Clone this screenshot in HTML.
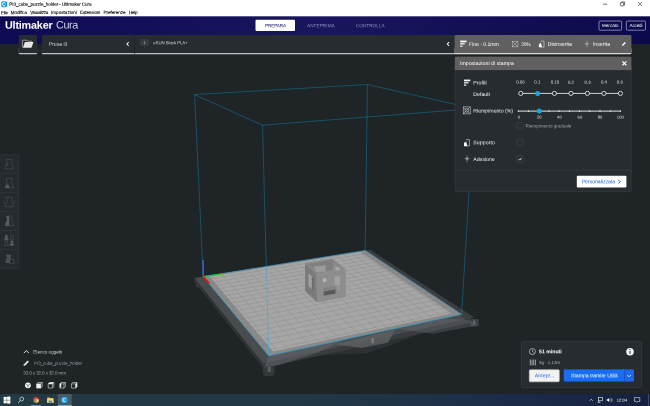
<!DOCTYPE html>
<html lang="it"><head><meta charset="utf-8"><title>PI3_cube_puzzle_holder - Ultimaker Cura</title>
<style>*{box-sizing:border-box;margin:0;padding:0}
html,body{width:650px;height:406px;overflow:hidden;background:#1f2427}
body{position:relative;font-family:"Liberation Sans",sans-serif}
.scene{position:absolute;left:0;top:0}
svg{display:block}
.t{position:absolute;left:0;top:0;transform-origin:0 0;white-space:nowrap;line-height:10px;font-family:"Liberation Sans",sans-serif}
.t u{text-decoration-thickness:0.3px;text-underline-offset:0.5px;text-decoration-color:rgba(0,0,0,0.55)}
.tl{position:absolute;left:0;top:0;width:650px;height:406px;will-change:transform}
</style></head>
<body>
<svg class="scene" width="650" height="406" viewBox="0 0 650 406">
<line x1="194.60" y1="94.60" x2="367.40" y2="84.50" stroke="#0ca9e3" stroke-width="0.8" stroke-opacity="0.42"/>
<line x1="367.40" y1="84.50" x2="474.00" y2="108.60" stroke="#0ca9e3" stroke-width="0.8" stroke-opacity="0.42"/>
<line x1="194.60" y1="94.60" x2="203.20" y2="276.60" stroke="#0ca9e3" stroke-width="0.8" stroke-opacity="0.42"/>
<line x1="367.40" y1="84.50" x2="365.20" y2="250.40" stroke="#0ca9e3" stroke-width="0.8" stroke-opacity="0.42"/>
<polygon points="300,356 366,353.2 388,346 424,332 424,326 300,350" fill="#2d3134"/>
<rect x="196.2" y="279.0" width="8" height="8.4" rx="1.8" fill="#44484b"/>
<rect x="198.0" y="280.4" width="2.2" height="4.8" fill="#585b5e"/>
<path d="M263 368.5a3 3 0 0 1 3-3h8.6v7.5a3 3 0 0 1-3 3h-5.6a3 3 0 0 1-3-3z" fill="#34383b"/>
<rect x="267.6" y="366.6" width="3.2" height="5.2" fill="#5c5f62"/>
<rect x="470.2" y="319.0" width="8.6" height="7.4" rx="1.4" fill="#3c4043"/>
<rect x="473.2" y="320.6" width="2.2" height="3.8" fill="#666a6d"/>
<polygon points="263.05,363.58 471.31,318.21 471.31,322.61 263.05,367.98" fill="#383c3f"/>
<polygon points="194.53,277.88 263.05,363.58 263.05,367.98 194.53,282.28" fill="#2f3336"/>
<polygon points="194.53,277.88 367.25,250.16 471.31,318.21 263.05,363.58" fill="#494c4f"/>
<polygon points="362.88,250.86 369.87,249.74 474.37,317.54 466.17,319.33" fill="#3c3f42"/>
<polygon points="269,356 345,339.8 318,352.5 277.5,365.5 264.5,367" fill="#6a6d70" fill-opacity="0.45"/>
<polygon points="398,328.8 446,318.2 470.5,320.2 477,325.4 432,333.8" fill="#6a6d70" fill-opacity="0.38"/>
<polygon points="334.6,344.2 395.4,329.6 387.7,342.7 361.5,348.1" fill="#5e6164" fill-opacity="0.8"/>
<rect x="371.5" y="338.2" width="2.2" height="5.0" fill="#7c7f82"/>
<polygon points="203.20,276.60 365.20,250.40 461.60,314.30 268.70,355.80" fill="#8a8a8a"/>
<polygon points="209.67,276.47 360.45,252.01 451.55,313.47 273.35,351.46" fill="#a6a6a6"/>
<path d="M212.08 275.16L279.52 353.47M205.81 279.76L369.13 253.01M220.88 273.74L290.21 351.17M208.48 282.98L373.14 255.67M229.58 272.33L300.76 348.90M211.20 286.28L377.23 258.38M238.20 270.94L311.18 346.66M213.99 289.64L381.41 261.14M246.73 269.56L321.47 344.45M216.84 293.09L385.66 263.96M255.17 268.19L331.62 342.26M219.75 296.61L390.00 266.84M263.54 266.84L341.66 340.10M222.73 300.21L394.43 269.78M271.82 265.50L351.56 337.97M225.77 303.89L398.96 272.78M280.02 264.18L361.35 335.87M228.89 307.66L403.58 275.84M288.14 262.86L371.02 333.79M232.08 311.52L408.29 278.96M296.18 261.56L380.57 331.73M235.35 315.47L413.11 282.16M304.14 260.27L390.01 329.70M238.70 319.52L418.03 285.42M312.03 259.00L399.33 327.70M242.13 323.67L423.06 288.75M319.85 257.74L408.54 325.71M245.64 327.92L428.20 292.16M327.58 256.48L417.65 323.76M249.24 332.27L433.45 295.64M335.25 255.24L426.64 321.82M252.94 336.74L438.83 299.21M342.84 254.02L435.54 319.91M256.72 341.32L444.33 302.85M350.36 252.80L444.33 318.02M260.61 346.02L449.95 306.58M357.82 251.59L453.01 316.15M264.60 350.85L455.71 310.39" stroke="#787878" stroke-width="0.4" fill="none" stroke-opacity="0.6"/>
<line x1="203.20" y1="276.60" x2="365.20" y2="250.40" stroke="#2aa5d8" stroke-width="0.85" stroke-opacity="0.6"/>
<line x1="365.20" y1="250.40" x2="461.60" y2="314.30" stroke="#2aa5d8" stroke-width="0.85" stroke-opacity="0.5"/>
<line x1="461.60" y1="314.30" x2="268.70" y2="355.80" stroke="#2aa5d8" stroke-width="0.85" stroke-opacity="0.8"/>
<line x1="268.70" y1="355.80" x2="203.20" y2="276.60" stroke="#2aa5d8" stroke-width="0.85" stroke-opacity="0.7"/>
<polygon points="305.00,263.00 332.40,258.60 345.80,269.30 316.50,273.90" fill="#8a8a8a"/>
<polygon points="308.43,264.11 332.21,260.30 342.02,268.23 317.04,272.16" fill="#7f7f7f"/>
<polygon points="313.4,266.2 325.6,265.6 325.6,271.6 316.0,272.0" fill="#9c9c9c"/>
<polygon points="333.0,262.0 343.5,269.0 343.5,271.5 333.0,270.6" fill="#8d8d8d"/>
<polygon points="335.4,266.6 339.8,267.8 340.2,271.0 335.4,270.4" fill="#a6a6a6"/>
<polygon points="305.00,263.00 316.50,273.90 317.10,302.50 305.00,291.00" fill="#7b7b7b"/>
<polygon points="308.50,273.31 314.32,278.84 314.54,291.66 308.58,286.00" fill="#a0a0a0"/>
<polygon points="311.76,276.41 314.32,278.84 314.54,291.66 311.91,289.17" fill="#6c6c6c"/>
<polygon points="316.50,273.90 345.80,269.30 345.80,297.00 317.10,302.50" fill="#8d8d8d"/>
<polygon points="323.04,278.57 326.25,278.04 326.30,281.86 323.10,282.40" fill="#b6b6b6"/>
<polygon points="334.63,276.81 339.96,275.94 340.02,289.46 334.74,290.41" fill="#a2a2a2"/>
<polygon points="334.70,285.65 340.00,284.72 340.02,289.46 334.74,290.41" fill="#949494"/>
<polygon points="323.19,287.94 336.53,285.61 336.58,293.72 323.33,296.18" fill="#838383"/>
<polygon points="323.83,291.53 335.39,289.45 335.42,293.38 323.90,295.50" fill="#5a5a5a"/>
<line x1="474.00" y1="108.60" x2="262.50" y2="125.20" stroke="#0ca9e3" stroke-width="0.8" stroke-opacity="0.42"/>
<line x1="262.50" y1="125.20" x2="194.60" y2="94.60" stroke="#0ca9e3" stroke-width="0.8" stroke-opacity="0.42"/>
<line x1="262.50" y1="125.20" x2="268.70" y2="355.80" stroke="#0ca9e3" stroke-width="0.8" stroke-opacity="0.42"/>
<line x1="474.00" y1="108.60" x2="461.60" y2="314.30" stroke="#0ca9e3" stroke-width="0.8" stroke-opacity="0.42"/>
<line x1="267.12" y1="297.00" x2="268.70" y2="355.80" stroke="#35b8ee" stroke-width="0.8" stroke-opacity="0.35"/>
<line x1="203.20" y1="276.60" x2="203.10" y2="260.00" stroke="#5a5aeb" stroke-width="1.3" stroke-opacity="1"/>
<line x1="203.20" y1="276.60" x2="221.80" y2="274.20" stroke="#22cc22" stroke-width="1.3" stroke-opacity="1"/>
<line x1="203.20" y1="276.60" x2="209.40" y2="283.20" stroke="#ee1111" stroke-width="1.6" stroke-opacity="1"/>
</svg>
<svg class="scene" width="650" height="406" viewBox="0 0 650 406">
<defs><linearGradient id="hg" x1="0" y1="0" x2="1" y2="0"><stop offset="0" stop-color="#0d0b54"/><stop offset="0.5" stop-color="#18165d"/><stop offset="1" stop-color="#0c0a4c"/></linearGradient><linearGradient id="tg" x1="0" y1="0" x2="1" y2="0"><stop offset="0" stop-color="#233a43"/><stop offset="0.4" stop-color="#223945"/><stop offset="0.6" stop-color="#203447"/><stop offset="0.78" stop-color="#1c2c48"/><stop offset="1" stop-color="#161f40"/></linearGradient></defs>
<rect x="0.00" y="16.00" width="650.00" height="28.00" fill="url(#hg)"/>
<rect x="0.00" y="0.00" width="650.00" height="16.30" fill="#ffffff"/>
<rect x="1.20" y="1.20" width="6.00" height="6.00" fill="#1ca0e4" rx="1.5"/>
<g stroke="#1a1a1a" stroke-width="0.6" fill="none"><path d="M603 4.2h4.2"/><rect x="620.4" y="2.7" width="3.2" height="3.2" rx="0.4"/><path d="M621.4 2.7v-0.8h3.2v3.2h-0.9"/><path d="M638 2.1l4 4M642 2.1l-4 4"/></g>
<rect x="255.50" y="19.80" width="39.50" height="11.20" fill="#ffffff" rx="1"/>
<rect x="599.00" y="21.00" width="22.60" height="9.20" fill="none" rx="1" stroke="#a5a3d2" stroke-width="0.75"/>
<rect x="626.30" y="21.00" width="19.20" height="9.20" fill="none" rx="1" stroke="#a5a3d2" stroke-width="0.75"/>
<rect x="18.70" y="48.00" width="18.40" height="6.30" fill="#bdbebf" rx="1"/>
<rect x="18.70" y="34.90" width="18.40" height="18.00" fill="#272c30" rx="1"/>
<rect x="18.70" y="50.00" width="18.40" height="2.90" fill="#272c30"/>
<rect x="41.90" y="48.00" width="414.00" height="6.30" fill="#bdbebf" rx="1"/>
<rect x="41.90" y="34.90" width="414.00" height="18.00" fill="#272c30" rx="1"/>
<rect x="41.90" y="50.00" width="414.00" height="2.90" fill="#272c30"/>
<rect x="134.30" y="34.80" width="0.60" height="19.50" fill="#1f2427"/>
<rect x="454.60" y="48.00" width="176.80" height="6.30" fill="#d6d6d6" rx="1"/>
<rect x="454.60" y="34.90" width="176.80" height="18.00" fill="#606060" rx="1"/>
<rect x="454.60" y="50.00" width="176.80" height="2.90" fill="#606060"/>
<rect x="455.20" y="57.00" width="176.00" height="134.60" fill="#272c30" rx="1" stroke="#3c4145" stroke-width="0.6"/>
<rect x="454.90" y="56.80" width="176.40" height="13.30" fill="#606060" rx="1"/>
<rect x="454.90" y="66.00" width="176.40" height="4.10" fill="#606060"/>
<rect x="455.50" y="169.80" width="175.40" height="0.60" fill="#3c4145"/>
<rect x="576.80" y="175.80" width="49.60" height="11.80" fill="#ffffff" rx="1"/>
<rect x="-1.00" y="154.80" width="19.80" height="113.50" fill="#252a2e" rx="1" stroke="#353a3e" stroke-width="0.6"/>
<rect x="0.00" y="173.40" width="18.80" height="0.60" fill="#353a3e"/>
<rect x="0.00" y="192.30" width="18.80" height="0.60" fill="#353a3e"/>
<rect x="0.00" y="211.20" width="18.80" height="0.60" fill="#353a3e"/>
<rect x="0.00" y="230.10" width="18.80" height="0.60" fill="#353a3e"/>
<rect x="0.00" y="249.00" width="18.80" height="0.60" fill="#353a3e"/>
<rect x="521.50" y="341.40" width="120.20" height="46.30" fill="#272c30" rx="1.5" stroke="#3c4145" stroke-width="0.6"/>
<rect x="529.30" y="369.80" width="30.00" height="12.00" fill="#f2f2f2" rx="1" stroke="#c9c9c9" stroke-width="0.6"/>
<rect x="563.80" y="369.50" width="60.50" height="12.60" fill="#0f469c" rx="1"/>
<rect x="563.80" y="369.50" width="60.50" height="11.80" fill="#196ef0" rx="1"/>
<rect x="624.30" y="369.50" width="9.60" height="12.60" fill="#4a2fa0" rx="1"/>
<rect x="624.30" y="369.50" width="9.60" height="11.80" fill="#1b69e8" rx="1"/>
<rect x="622.00" y="369.50" width="2.30" height="11.80" fill="#196ef0"/>
<rect x="624.00" y="369.50" width="1.10" height="11.80" fill="#1757c8"/>
<rect x="0.00" y="394.00" width="650.00" height="12.00" fill="url(#tg)"/>
<rect x="57.80" y="394.00" width="13.90" height="12.00" fill="#465c66"/>
<rect x="30.70" y="405.30" width="10.40" height="0.70" fill="#76b9ed"/>
<rect x="57.80" y="405.30" width="13.90" height="0.70" fill="#8ccbf5"/>
<rect x="648.40" y="394.00" width="0.50" height="12.00" fill="#6b7690"/>
</svg>
<svg class="scene" width="650" height="406" viewBox="0 0 650 406">
<path d="M1.2 14.45h2M10.9 14.45h3.2M30.3 14.45h2.6M51.1 14.45h0.9M83.0 14.45h2M106.2 14.45h1.5M128.9 14.45h2.8" stroke="#000" stroke-opacity="0.6" stroke-width="0.35"/>
<path d="M5.3 3.1a1.6 1.6 0 1 0 0 2.2" stroke="#fff" stroke-width="0.9" fill="none"/>
<path d="M22.4 47.5v-7.3h4.6l0.9 1h3.8v1" stroke="#e4e4e4" stroke-width="0.55" fill="none"/><path d="M24.9 42.1h8.6l-2 5.6h-8.6z" fill="#e6e6e6"/>
<path d="M128.7 42.2l-1.8 1.9l1.8 1.9" stroke="#f0f0f0" stroke-width="1.05" fill="none"/>
<path d="M449.1 42.2l-1.8 1.9l1.8 1.9" stroke="#f0f0f0" stroke-width="1.05" fill="none"/>
<path d="M140.1 39.2h8.6v6.6h-3l-1.3 1.9l-1.3-1.9h-3z" fill="#393b3c"/>
<g fill="#ffffff"><rect x="460.2" y="40.6" width="6.30" height="1.70"/><rect x="460.2" y="43.20" width="4.50" height="1.20"/><rect x="460.2" y="45.50" width="2.30" height="1.20"/></g>
<g fill="#ffffff"><rect x="464.0" y="79.6" width="6.30" height="1.70"/><rect x="464.0" y="82.20" width="4.50" height="1.20"/><rect x="464.0" y="84.50" width="2.30" height="1.20"/></g>
<g stroke="#d8d8d8" stroke-width="0.42" fill="none"><rect x="512.3" y="41.3" width="5.6" height="5.6"/><path d="M512.3 41.3l5.6 5.6M517.9 41.3l-5.6 5.6"/></g>
<g stroke="#e0e0e0" stroke-width="0.5" fill="none"><rect x="463.2" y="106.9" width="7.0" height="7.0"/><path d="M463.2 106.9l7.0 7.0M470.2 106.9l-7.0 7.0"/><circle cx="466.7" cy="110.4" r="1.93" fill="none"/></g>
<g transform="translate(538.8 40.9) scale(0.95)"><path d="M2.0 0.3h3.5v6.2h-2.6" fill="none" stroke="#ffffff" stroke-width="0.5"/><path d="M0.1 6.8v-3.2l2.1-1.6l1.2 4.8z" fill="#ffffff"/></g>
<g transform="translate(463.9 139.4) scale(1.0)"><path d="M2.0 0.3h3.5v6.2h-2.6" fill="none" stroke="#ffffff" stroke-width="0.5"/><path d="M0.1 6.8v-3.2l2.1-1.6l1.2 4.8z" fill="#ffffff"/></g>
<g transform="translate(584.2 40.7) scale(0.95)" stroke="#b8b8b8" stroke-width="0.5" fill="none"><path d="M2.9 0v6.8M0.3 3.3h5.2"/><circle cx="2.9" cy="3.3" r="1.1"/></g>
<g transform="translate(464.2 155.4) scale(0.98)" stroke="#c0c4c6" stroke-width="0.5" fill="none"><path d="M2.9 0v6.8M0.3 3.3h5.2"/><circle cx="2.9" cy="3.3" r="1.1"/></g>
<path d="M621.9 45.9l0.4-1.4l2.6-2.6l1 1l-2.6 2.6z" fill="#ffffff"/>
<path d="M622.4 61.3l4 4M626.4 61.3l-4 4" stroke="#fff" stroke-width="1.15"/>
<path d="M520.8 93.4H620.4" stroke="#dcdcdc" stroke-width="0.95"/>
<circle cx="520.8" cy="93.4" r="2.1" fill="#272c30" stroke="#f4f4f4" stroke-width="0.8"/>
<circle cx="537.6" cy="93.4" r="2.5" fill="#0ca9e3"/>
<circle cx="554.4" cy="93.4" r="2.1" fill="#272c30" stroke="#f4f4f4" stroke-width="0.8"/>
<circle cx="571.0" cy="93.4" r="2.1" fill="#272c30" stroke="#f4f4f4" stroke-width="0.8"/>
<circle cx="587.4" cy="93.4" r="2.1" fill="#272c30" stroke="#f4f4f4" stroke-width="0.8"/>
<circle cx="603.9" cy="93.4" r="2.1" fill="#272c30" stroke="#f4f4f4" stroke-width="0.8"/>
<circle cx="620.4" cy="93.4" r="2.1" fill="#272c30" stroke="#f4f4f4" stroke-width="0.8"/>
<path d="M518.2 111.1H620.9" stroke="#bfc1c2" stroke-width="1.2"/>
<rect x="517.85" y="110.3" width="0.8" height="1.6" fill="#f4f4f4"/>
<rect x="528.07" y="110.3" width="0.8" height="1.6" fill="#f4f4f4"/>
<rect x="538.29" y="110.3" width="0.8" height="1.6" fill="#f4f4f4"/>
<rect x="548.51" y="110.3" width="0.8" height="1.6" fill="#f4f4f4"/>
<rect x="558.73" y="110.3" width="0.8" height="1.6" fill="#f4f4f4"/>
<rect x="568.95" y="110.3" width="0.8" height="1.6" fill="#f4f4f4"/>
<rect x="579.17" y="110.3" width="0.8" height="1.6" fill="#f4f4f4"/>
<rect x="589.39" y="110.3" width="0.8" height="1.6" fill="#f4f4f4"/>
<rect x="599.61" y="110.3" width="0.8" height="1.6" fill="#f4f4f4"/>
<rect x="609.83" y="110.3" width="0.8" height="1.6" fill="#f4f4f4"/>
<rect x="620.05" y="110.3" width="0.8" height="1.6" fill="#f4f4f4"/>
<circle cx="539.2" cy="111.1" r="2.5" fill="#0ca9e3"/>
<rect x="516.7" y="122.6" width="6.7" height="6.8" rx="0.8" fill="#292e32" stroke="#3a3f43" stroke-width="0.8"/>
<rect x="516.7" y="139.1" width="6.7" height="6.8" rx="0.8" fill="#292e32" stroke="#3d4246" stroke-width="0.8"/>
<rect x="516.7" y="155.6" width="6.7" height="6.8" rx="0.8" fill="#292e32" stroke="#3d4246" stroke-width="0.8"/>
<path d="M518.8 159.1l1 1l1.6-1.9" stroke="#fff" stroke-width="0.85" fill="none"/>
<path d="M618.4 179.9l1.8 1.8l-1.8 1.8" stroke="#1a60d8" stroke-width="1.0" fill="none"/>
<path d="M6.4 159.4h5.8l-0.7 3.8l2.2 5.8h-8.8l2.2-5.8z" stroke="#565b5f" stroke-width="0.5" fill="none"/>
<path d="M6.4 178.3h5.8l-0.7 3.8l2.2 5.8h-8.8l2.2-5.8z" stroke="#565b5f" stroke-width="0.5" fill="none"/>
<path d="M6.4 197.20000000000002h5.8l-0.7 3.8l2.2 5.8h-8.8l2.2-5.8z" stroke="#565b5f" stroke-width="0.5" fill="none"/>
<path d="M6.4 216.1h5.8l-0.7 3.8l2.2 5.8h-8.8l2.2-5.8z" stroke="#565b5f" stroke-width="0.5" fill="none"/>
<path d="M5.2 164.6h3.2M7.6 163.8l0.9 0.8l-0.9 0.8" stroke="#565b5f" stroke-width="0.5" fill="none"/>
<path d="M5.2 187.9l1.4-3.4h1.8l1.2 3.4z" fill="#565b5f"/>
<path d="M4.6 200.6c-0.8 1 -0.8 2.4 0 3.4M13.8 200.6c0.8 1 0.8 2.4 0 3.4" stroke="#565b5f" stroke-width="0.5" fill="none"/>
<path d="M9.3 216.2h-2.9l0.7 3.8l-2.2 5.8h4.4z" fill="#565b5f"/>
<path d="M5.1000000000000005 235.29999999999998h2.6l-0.3 1.8l1 2.8h-4l1-2.8z" stroke="#565b5f" stroke-width="0.45" fill="#565b5f"/><path d="M10.6 235.29999999999998h2.6l-0.3 1.8l1 2.8h-4l1-2.8z" stroke="#565b5f" stroke-width="0.45" fill="none"/><path d="M5.1000000000000005 240.89999999999998h2.6l-0.3 1.8l1 2.8h-4l1-2.8z" stroke="#565b5f" stroke-width="0.45" fill="none"/><path d="M10.6 240.89999999999998h2.6l-0.3 1.8l1 2.8h-4l1-2.8z" stroke="#565b5f" stroke-width="0.45" fill="#565b5f"/>
<path d="M6.2 254.6h5l-0.6 3.4l1.8 5h-7.4l1.8-5z" fill="#4b5054"/>
<rect x="9.8" y="259.4" width="4.2" height="4.4" fill="#252a2e" stroke="#565b5f" stroke-width="0.45"/>
<path d="M23.8 353.1l2.55-2.5l2.55 2.5" stroke="#ececec" stroke-width="0.95" fill="none"/>
<path d="M23.5 365.9l0.5-1.7l3.7-3.7l1.2 1.2l-3.7 3.7z" fill="#e8e8e8"/>
<circle cx="27.9" cy="385.3" r="2.9" fill="#f2f2f2"/><path d="M26.0 384.40000000000003l1.9 1l1.9-1M27.9 385.40000000000003v2.2" stroke="#1f2427" stroke-width="0.5" fill="none"/>
<path d="M36.6 383.90000000000003l1.4-1.4h4.2v4.2l-1.4 1.4h-4.2zM36.6 383.90000000000003h4.2v4.2M40.8 383.90000000000003l1.4-1.4" stroke="#f2f2f2" stroke-width="0.55" fill="none"/><rect x="36.6" y="383.90000000000003" width="4.2" height="4.2" fill="#f2f2f2"/>
<path d="M48.2 383.90000000000003l1.4-1.4h4.2v4.2l-1.4 1.4h-4.2zM48.2 383.90000000000003h4.2v4.2M52.4 383.90000000000003l1.4-1.4" stroke="#f2f2f2" stroke-width="0.55" fill="none"/><path d="M48.2 383.90000000000003l1.4-1.4h4.2l-1.4 1.4z" fill="#f2f2f2"/>
<path d="M59.800000000000004 383.90000000000003l1.4-1.4h4.2v4.2l-1.4 1.4h-4.2zM59.800000000000004 383.90000000000003h4.2v4.2M64.0 383.90000000000003l1.4-1.4" stroke="#f2f2f2" stroke-width="0.55" fill="none"/><path d="M59.800000000000004 383.90000000000003l1.4-1.4v4.2l-1.4 1.4z" fill="#f2f2f2"/>
<path d="M71.4 383.90000000000003l1.4-1.4h4.2v4.2l-1.4 1.4h-4.2zM71.4 383.90000000000003h4.2v4.2M75.60000000000001 383.90000000000003l1.4-1.4" stroke="#f2f2f2" stroke-width="0.55" fill="none"/><path d="M75.60000000000001 383.90000000000003l1.4-1.4v4.2l-1.4 1.4z" fill="#f2f2f2"/>
<circle cx="532.4" cy="351.6" r="3.0" stroke="#f0f0f0" stroke-width="0.6" fill="none"/><path d="M532.4 349.8v1.9l1.2 0.8" stroke="#f0f0f0" stroke-width="0.55" fill="none"/>
<circle cx="630.0" cy="351.7" r="3.8" fill="#f4f4f4"/><path d="M630 351.0v2.9" stroke="#272c30" stroke-width="1.0"/><circle cx="630" cy="349.6" r="0.6" fill="#272c30"/>
<path d="M530.3 359.6v5.8M532.0 359.6v5.8M533.7 359.6v5.8M535.4 359.6v5.8" stroke="#d0d2d4" stroke-width="0.7"/>
<path d="M627.3 375l1.8 1.8l1.8-1.8" stroke="#fff" stroke-width="0.8" fill="none"/>
<g fill="#ffffff"><rect x="3.6" y="396.9" width="3.1" height="3"/><rect x="7.1" y="396.6" width="3.3" height="3.3"/><rect x="3.6" y="400.3" width="3.1" height="3"/><rect x="7.1" y="400.3" width="3.3" height="3.3"/></g>
<circle cx="21.8" cy="399" r="1.9" stroke="#fff" stroke-width="0.6" fill="none"/><path d="M20.4 400.5l-2.2 2.4" stroke="#fff" stroke-width="0.7"/>
<circle cx="36" cy="400" r="2.9" fill="#e33b2e"/><path d="M36 400l-2.6 1.4a2.9 2.9 0 0 0 2.9 1.5z" fill="#2da94f"/><path d="M36 400l0.4 2.9a2.9 2.9 0 0 0 2.4-4.0z" fill="#fcc934"/><circle cx="36" cy="400" r="1.25" fill="#fff"/><circle cx="36" cy="400" r="0.95" fill="#4285f4"/>
<path d="M47.2 397.4h2.3l0.6 0.7h3.3v4.7h-6.2z" fill="#f5c64a"/><rect x="47.2" y="399" width="6.2" height="3.8" fill="#fbd96a"/><rect x="48.6" y="400.6" width="3.4" height="2.2" fill="#3d8fe0"/>
<rect x="61.4" y="397" width="6" height="6" rx="1.4" fill="#1ca0e4"/><path d="M65.5 398.9a1.6 1.6 0 1 0 0 2.2" stroke="#fff" stroke-width="0.9" fill="none"/>
<path d="M589.6 400.8l1.6-1.6l1.6 1.6" stroke="#fff" stroke-width="0.6" fill="none"/>
<rect x="598.3" y="397.6" width="4.2" height="3.2" stroke="#fff" stroke-width="0.55" fill="none"/><path d="M597.4 402.3h3M599 400.8v1.5" stroke="#fff" stroke-width="0.55"/>
<path d="M606.8 399.3h1l1.4-1.3v4l-1.4-1.3h-1z" fill="#fff"/><path d="M610.3 398.6c0.6 0.8 0.6 2 0 2.8M611.4 397.8c1 1.3 1 3.1 0 4.4" stroke="#fff" stroke-width="0.45" fill="none"/>
<path d="M634.4 397.6h5.4v3.8h-2l-0.9 1l-0.9-1h-1.6z" stroke="#fff" stroke-width="0.55" fill="none"/>
</svg>
<div class="tl">
<span class="t" style="transform:translate(9.30px,-0.23px) rotate(0.03deg);font-size:4.650px;letter-spacing:-0.101px;color:#000;font-weight:400;-webkit-text-stroke:0.1px #000;">PI3_cube_puzzle_holder - Ultimaker Cura</span>
<span class="t" style="transform:translate(1.10px,8.17px) rotate(0.03deg);font-size:4.550px;letter-spacing:-0.232px;color:#000;font-weight:400;-webkit-text-stroke:0.1px #000;">File</span>
<span class="t" style="transform:translate(10.80px,8.03px) rotate(0.03deg);font-size:4.550px;letter-spacing:-0.105px;color:#000;font-weight:400;-webkit-text-stroke:0.1px #000;">Modifica</span>
<span class="t" style="transform:translate(30.20px,8.00px) rotate(0.03deg);font-size:4.550px;letter-spacing:-0.259px;color:#000;font-weight:400;-webkit-text-stroke:0.1px #000;">Visualizza</span>
<span class="t" style="transform:translate(51.00px,7.94px) rotate(0.03deg);font-size:4.550px;letter-spacing:0.031px;color:#000;font-weight:400;-webkit-text-stroke:0.1px #000;">Impostazioni</span>
<span class="t" style="transform:translate(80.10px,7.99px) rotate(0.03deg);font-size:4.550px;letter-spacing:-0.088px;color:#000;font-weight:400;-webkit-text-stroke:0.1px #000;">Estensioni</span>
<span class="t" style="transform:translate(103.40px,8.07px) rotate(0.03deg);font-size:4.550px;letter-spacing:-0.005px;color:#000;font-weight:400;-webkit-text-stroke:0.1px #000;">Preferenze</span>
<span class="t" style="transform:translate(128.80px,7.92px) rotate(0.03deg);font-size:4.550px;letter-spacing:-0.240px;color:#000;font-weight:400;-webkit-text-stroke:0.1px #000;">Help</span>
<span class="t" style="transform:translate(5.00px,19.77px) rotate(0.03deg);font-size:10.800px;letter-spacing:-0.191px;color:#ffffff;font-weight:700;">Ultimaker</span>
<span class="t" style="transform:translate(56.00px,19.56px) rotate(0.03deg);font-size:10.800px;letter-spacing:-0.352px;color:#d4d4e6;font-weight:400;">Cura</span>
<span class="t" style="transform:translate(265.00px,21.32px) rotate(0.03deg);font-size:4.700px;letter-spacing:-0.152px;color:#1a1a5c;font-weight:400;">PREPARA</span>
<span class="t" style="transform:translate(307.00px,21.28px) rotate(0.03deg);font-size:4.700px;letter-spacing:0.049px;color:#8e8cc0;font-weight:400;">ANTEPRIMA</span>
<span class="t" style="transform:translate(355.70px,21.16px) rotate(0.03deg);font-size:4.700px;letter-spacing:0.049px;color:#8e8cc0;font-weight:400;">CONTROLLA</span>
<span class="t" style="transform:translate(602.00px,20.91px) rotate(0.03deg);font-size:4.500px;letter-spacing:0.048px;color:#ffffff;font-weight:400;">Mercato</span>
<span class="t" style="transform:translate(629.50px,20.92px) rotate(0.03deg);font-size:4.500px;letter-spacing:-0.119px;color:#ffffff;font-weight:400;">Accedi</span>
<span class="t" style="transform:translate(48.80px,38.81px) rotate(0.03deg);font-size:5.200px;letter-spacing:-0.066px;color:#d8d8d8;font-weight:400;">Prusa i3</span>
<span class="t" style="transform:translate(153.20px,38.34px) rotate(0.03deg);font-size:4.400px;letter-spacing:-0.084px;color:#d8d8d8;font-weight:400;">eSUN Black PLA+</span>
<span class="t" style="transform:translate(143.50px,38.10px) rotate(0.03deg);font-size:3.600px;letter-spacing:-0.200px;color:#d8d8d8;font-weight:400;">1</span>
<span class="t" style="transform:translate(469.00px,38.93px) rotate(0.03deg);font-size:5.200px;letter-spacing:-0.064px;color:#ffffff;font-weight:400;">Fine - 0.1mm</span>
<span class="t" style="transform:translate(521.20px,39.10px) rotate(0.03deg);font-size:5.000px;letter-spacing:-0.239px;color:#ffffff;font-weight:400;">20%</span>
<span class="t" style="transform:translate(547.70px,38.84px) rotate(0.03deg);font-size:5.200px;letter-spacing:-0.002px;color:#ffffff;font-weight:400;">Disinserita</span>
<span class="t" style="transform:translate(592.80px,38.82px) rotate(0.03deg);font-size:5.200px;letter-spacing:0.048px;color:#ffffff;font-weight:400;">Inserita</span>
<span class="t" style="transform:translate(459.90px,57.97px) rotate(0.03deg);font-size:5.200px;letter-spacing:0.047px;color:#ffffff;font-weight:400;">Impostazioni di stampa</span>
<span class="t" style="transform:translate(473.30px,77.51px) rotate(0.03deg);font-size:5.200px;letter-spacing:0.059px;color:#f0f0f0;font-weight:400;">Profili</span>
<span class="t" style="transform:translate(473.30px,89.08px) rotate(0.03deg);font-size:5.200px;letter-spacing:0.023px;color:#f0f0f0;font-weight:400;">Default</span>
<span class="t" style="transform:translate(516.20px,77.62px) rotate(0.03deg);font-size:4.350px;letter-spacing:-0.017px;color:#e0e0e0;font-weight:400;">0.06</span>
<span class="t" style="transform:translate(534.30px,77.62px) rotate(0.03deg);font-size:4.350px;letter-spacing:-0.016px;color:#e0e0e0;font-weight:400;">0.1</span>
<span class="t" style="transform:translate(550.70px,77.62px) rotate(0.03deg);font-size:4.350px;letter-spacing:-0.017px;color:#e0e0e0;font-weight:400;">0.15</span>
<span class="t" style="transform:translate(567.90px,77.64px) rotate(0.03deg);font-size:4.350px;letter-spacing:0.051px;color:#e0e0e0;font-weight:400;">0.2</span>
<span class="t" style="transform:translate(584.50px,77.64px) rotate(0.03deg);font-size:4.350px;letter-spacing:0.051px;color:#e0e0e0;font-weight:400;">0.3</span>
<span class="t" style="transform:translate(600.90px,77.62px) rotate(0.03deg);font-size:4.350px;letter-spacing:0.051px;color:#e0e0e0;font-weight:400;">0.4</span>
<span class="t" style="transform:translate(616.80px,77.58px) rotate(0.03deg);font-size:4.350px;letter-spacing:0.051px;color:#e0e0e0;font-weight:400;">0.6</span>
<span class="t" style="transform:translate(473.30px,105.56px) rotate(0.03deg);font-size:5.200px;letter-spacing:-0.019px;color:#f0f0f0;font-weight:400;">Riempimento (%)</span>
<span class="t" style="transform:translate(517.65px,112.51px) rotate(0.03deg);font-size:4.100px;letter-spacing:0.019px;color:#e0e0e0;font-weight:400;">0</span>
<span class="t" style="transform:translate(537.00px,112.55px) rotate(0.03deg);font-size:4.100px;letter-spacing:0.019px;color:#e0e0e0;font-weight:400;">20</span>
<span class="t" style="transform:translate(557.10px,112.47px) rotate(0.03deg);font-size:4.100px;letter-spacing:0.019px;color:#e0e0e0;font-weight:400;">40</span>
<span class="t" style="transform:translate(577.60px,112.47px) rotate(0.03deg);font-size:4.100px;letter-spacing:0.019px;color:#e0e0e0;font-weight:400;">60</span>
<span class="t" style="transform:translate(597.70px,112.57px) rotate(0.03deg);font-size:4.100px;letter-spacing:0.019px;color:#e0e0e0;font-weight:400;">80</span>
<span class="t" style="transform:translate(616.85px,112.49px) rotate(0.03deg);font-size:4.100px;letter-spacing:0.019px;color:#e0e0e0;font-weight:400;">100</span>
<span class="t" style="transform:translate(525.60px,121.57px) rotate(0.03deg);font-size:4.600px;letter-spacing:-0.021px;color:#9ca0a3;font-weight:400;">Riempimento graduale</span>
<span class="t" style="transform:translate(473.30px,137.35px) rotate(0.03deg);font-size:5.200px;letter-spacing:0.092px;color:#f0f0f0;font-weight:400;">Supporto</span>
<span class="t" style="transform:translate(473.30px,154.03px) rotate(0.03deg);font-size:5.200px;letter-spacing:-0.030px;color:#f0f0f0;font-weight:400;">Adesione</span>
<span class="t" style="transform:translate(581.70px,176.22px) rotate(0.03deg);font-size:5.200px;letter-spacing:-0.045px;color:#1a60d8;font-weight:400;">Personalizzata</span>
<span class="t" style="transform:translate(33.30px,347.54px) rotate(0.03deg);font-size:4.600px;letter-spacing:-0.002px;color:#d0d0d0;font-weight:400;">Elenco oggetti</span>
<span class="t" style="transform:translate(34.10px,358.64px) rotate(0.03deg);font-size:4.500px;letter-spacing:-0.075px;color:#9a9ea1;font-weight:400;">PI3_cube_puzzle_holder</span>
<span class="t" style="transform:translate(23.30px,368.53px) rotate(0.03deg);font-size:4.500px;letter-spacing:-0.097px;color:#a8acae;font-weight:400;">32.0 x 32.0 x 32.0 mm</span>
<span class="t" style="transform:translate(539.10px,346.20px) rotate(0.03deg);font-size:5.200px;letter-spacing:-0.020px;color:#ffffff;font-weight:700;">51 minuti</span>
<span class="t" style="transform:translate(539.10px,358.06px) rotate(0.03deg);font-size:4.400px;letter-spacing:-0.010px;color:#b4b7b9;font-weight:400;">3g · 1.12m</span>
<span class="t" style="transform:translate(534.80px,370.17px) rotate(0.03deg);font-size:5.200px;letter-spacing:0.052px;color:#1a60d8;font-weight:400;">Antepr...</span>
<span class="t" style="transform:translate(571.00px,370.25px) rotate(0.03deg);font-size:5.200px;letter-spacing:-0.032px;color:#ffffff;font-weight:400;">Stampa tramite USB</span>
<span class="t" style="transform:translate(616.80px,395.38px) rotate(0.03deg);font-size:4.100px;letter-spacing:0.030px;color:#ffffff;font-weight:400;">12:04</span>
</div>
</body></html>
